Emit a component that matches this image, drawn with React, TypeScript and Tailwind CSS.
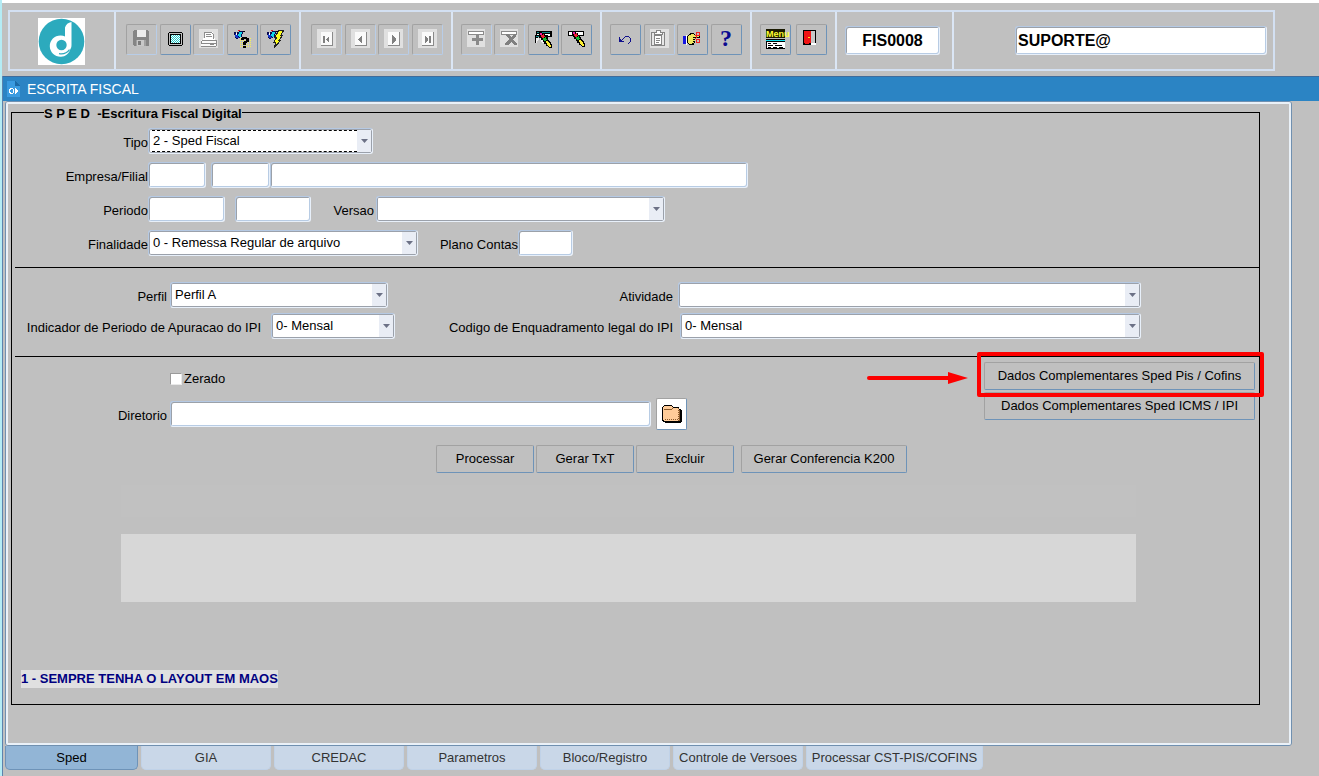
import React, { useState } from 'react';
import clsx from 'clsx';

const TABS = ['Sped', 'GIA', 'CREDAC', 'Parametros', 'Bloco/Registro', 'Controle de Versoes', 'Processar CST-PIS/COFINS'];

const FRAME =
  'rounded-[3px] border border-t-[#b5c9e3] border-l-[#b5c9e3] border-r-[#e8f0fa] border-b-[#e8f0fa] bg-white outline-none';
const SUNKEN = `${FRAME} shadow-[inset_1px_1px_0_#9ba1a9,inset_-1px_-1px_0_#b8cce4]`;
const INPUT = `${SUNKEN} h-[26px] px-1`;
const BUTTON = 'rounded-[2px] border border-t-[#a2a2a2] border-l-[#a2a2a2]';

/* ---------- icons ---------- */

const Icon = ({ children }: { children: React.ReactNode }) => (
  <svg width="29" height="29" viewBox="0 0 29 29" shapeRendering="crispEdges" aria-hidden="true">
    {children}
  </svg>
);

const Plate = () => <rect x="5" y="4" width="19" height="19" fill="#e0e0e0" />;

const Logo = () => (
  <svg width="47" height="47" viewBox="0 0 47 47" role="img" aria-label="Logo">
    <rect width="47" height="47" fill="#fff" />
    <circle cx="23.5" cy="23.5" r="22.8" fill="#2caabd" />
    <path
      d="M27 9.500C28 6.500 30 4.500 33.500 4V27c0 2-.6 3.500-1.500 5-1.500 4-4.500 6.500-9 6.700-6 .2-11.200-4.500-11.200-10.500S16.500 17.500 22.500 17.500c1.800 0 3.300.4 4.500 1.100z"
      fill="#fff"
    />
    <circle cx="23.500" cy="27" r="5.200" fill="#2caabd" />
    <path d="M21 35.600c4.500.8 8.200-.8 10.500-4" stroke="#2caabd" strokeWidth="1.200" fill="none" />
  </svg>
);

const SaveIcon = () => (
  <Icon>
    <path d="M6 6h1V5h14v1h1v15H7v-1H6z" fill="#858585" />
    <rect x="10" y="5" width="9" height="7" fill="#ececec" />
    <rect x="9" y="15" width="10" height="6" fill="#a0a0a0" />
    <rect x="10" y="15" width="7" height="6" fill="#c8c8c8" />
    <rect x="11" y="16" width="3" height="4" fill="#7b7b7b" />
  </Icon>
);

const ScreenIcon = () => (
  <Icon>
    <path d="M8 7h13v1h1v12h-1v1H8v-1H7V8h1z" fill="#000" />
    <rect x="8" y="8" width="13" height="12" fill="#c0c0c0" />
    <rect x="9" y="9" width="11" height="10" fill="#000" />
    <rect x="10" y="10" width="9" height="8" fill="#fff" />
    {[10, 12, 14, 16].map((y) => (
      <React.Fragment key={y}>
        {[10, 12, 14, 16, 18].map((x) => (
          <rect key={x} x={x} y={y} width="1" height="1" fill="#20c8c8" />
        ))}
        {[11, 13, 15, 17].map((x) => (
          <rect key={x} x={x} y={y + 1} width="1" height="1" fill="#20c8c8" />
        ))}
      </React.Fragment>
    ))}
  </Icon>
);

const PrinterIcon = () => (
  <Icon>
    <Plate />
    <path d="M10 7h9v2h1v4h1v2H9v-2h1z" fill="#fff" />
    <path d="M10 7h8v1h-8zM10 8h1v5h-1zM18 8h1v1h-1zM19 9h1v5h-1zM12 9h5v1h-5zM12 11h6v1h-6z" fill="#8e8e8e" />
    <path d="M7 15h16v6H7z" fill="#fafafa" />
    <path d="M8 15h14v1H8zM7 16h1v2H7zM7 18h15v1H7zM7 21h15v1H7zM22 15h1v6h-1zM16 19h4v1h-4z" fill="#8a8a8a" />
  </Icon>
);

const Torch = () => (
  <>
    <path d="M6 7h2v1h1V7h2V6h4v3h-1v3h-2v1h-2v1H8v-1H7v-3H6z" fill="#0a0a50" />
    <path d="M7 9h2v1h1v2h1v1H8v-1H7z" fill="#1536c8" />
    <path d="M11 7h3v2h-1v3h-2v-1h-1V9h1z" fill="#10d4ea" />
    <rect x="8" y="8" width="1" height="2" fill="#fff" />
    <rect x="10" y="5" width="2" height="1" fill="#e02020" />
    <rect x="15" y="6" width="2" height="1" fill="#000" />
  </>
);

const EnterQueryIcon = () => (
  <Icon>
    <Torch />
    {[13, 15, 17, 19, 21].map((y) => (
      <line key={y} x1="12" x2="24" y1={y + 0.5} y2={y + 0.5} stroke="#f5f05a" strokeDasharray="1 1" />
    ))}
    <path d="M14 12h5v1h2v4h-2v1h-1v2h-3v-3h1v-1h2v-2h-2v1h-3v-2h1zM15 21h3v2h-3z" fill="#000" />
  </Icon>
);

const ExecuteQueryIcon = () => (
  <Icon>
    <Torch />
    <path d="M18 5h5l-3 5h2l-4 5h2l-7 8 2-6h-2l3-5h-2z" fill="#ffff20" stroke="#222" strokeWidth="1" />
  </Icon>
);

const NavIcon = ({ d }: { d: string }) => (
  <Icon>
    <Plate />
    <rect x="9" y="7" width="12" height="14" fill="#8a8a8a" />
    <rect x="9" y="7" width="11" height="13" fill="#fafafa" />
    <path d={d} fill="#808080" />
  </Icon>
);

const InsertIcon = () => (
  <Icon>
    <rect x="5" y="4" width="18" height="18" fill="#e0e0e0" />
    <rect x="6.500" y="6.500" width="15" height="3" fill="#fff" stroke="#8a8a8a" />
    <path d="M14 9h3v4h4v3h-4v4h-3v-4h-4v-3h4z" fill="#8a8a8a" />
  </Icon>
);

const RemoveIcon = () => (
  <Icon>
    <rect x="5" y="4" width="18" height="18" fill="#e0e0e0" />
    <rect x="6.500" y="6.500" width="15" height="3" fill="#fff" stroke="#8a8a8a" />
    <path d="M11 9h2l3 3 3-3h2v2l-3 3 4 5v1h-3l-3-3-3 3h-3v-1l4-5-3-3z" fill="#808080" />
  </Icon>
);

const Pencil = () => (
  <>
    <path d="M10 6h3v1h1v1h2v2h2v2h1v2h1v1h1v1h1v2h1v4h-3v-1h-1v-1h-2v-2h-2v-2h-1v-2h-2v-2h-1v-1h-1z" fill="#000" />
    <path d="M11 7h2v2h-2z" fill="#f01ca8" />
    <path d="M12 9h2V8h1v2h1v1h-1v1h-2v-1h-1z" fill="#f02030" />
    <path d="M14 12h2v-1h1v2h1v1h-1v1h-2v-1h-1z" fill="#10c030" />
    <path d="M17 15h2v1h1v1h1v2h1v2h-2v-1h-1v-1h-1v-2h-1z" fill="#fff030" />
  </>
);

const ClearRecordIcon = () => (
  <Icon>
    <path d="M7 6h16v6H7z" fill="#000" />
    <path d="M8 7h13v1H8z" fill="#118888" />
    <path d="M8 9h13v2H8z" fill="#fff" />
    <path d="M6 10h13v8H6z" fill="#000" />
    <path d="M7 11h11v1H7z" fill="#118888" />
    <path d="M7 13h11v5H7z" fill="#eee" />
    <path d="M9 12v1h1v2H9v1H8v2H6v1h7v-2h-1v-2h-1v-2h-1z" fill="#c0c0c0" />
    <g transform="translate(0 1)">
      <Pencil />
    </g>
  </Icon>
);

const ClearFieldIcon = () => (
  <Icon>
    <rect x="6.500" y="6.500" width="15" height="4" fill="#fff" stroke="#000" />
    <Pencil />
  </Icon>
);

const UndoIcon = () => (
  <Icon>
    <path
      d="M8 12h1v2h1v1h1v-1h1v-1h1v-1h1v-1h4v1h1v1h1v4h-1v1h-1v1h-1v-1h1v-1h1v-4h-1v-1h-4v1h-1v1h-1v1h-1v1h2v1H8z"
      fill="#10108c"
    />
  </Icon>
);

const ClipboardIcon = () => (
  <Icon>
    <Plate />
    <rect x="6.500" y="7.500" width="13" height="13" fill="#e8e8e8" stroke="#858585" />
    <rect x="9.500" y="10.500" width="7" height="9" fill="#fff" stroke="#858585" />
    <path d="M9.500 9.500V7.500h2V5.500h4v2h2v2z" fill="#fff" stroke="#858585" />
    <path d="M11 13h4v1h-4zM11 15h4v1h-4zM11 17h3v1h-3z" fill="#858585" />
  </Icon>
);

const HandIcon = () => (
  <Icon>
    <path d="M5 11h3v8H5z" fill="#1414e0" />
    <path d="M8 10h1v10H8z" fill="#fff" />
    <path d="M9 11h1v-1h1V9h1V8h4v1h1v1h5v3h-5v5h-1v2h-5v-1h-1v-1H9z" fill="#000" />
    <path d="M10 11h1v-1h2V9h3v1h1v1h4v1h-6v6h-1v1h-3v-1h-1z" fill="#f0e860" />
    <path d="M15 13h2v1h-2zM15 15h2v1h-2zM15 17h1v1h-1z" fill="#f0e860" />
    <path d="M18.500 7.500h3v3h-3zM18.500 14.500h3v3h-3zM17 10l2 2-2 2" fill="none" stroke="#f02020" />
  </Icon>
);

const HelpIcon = () => (
  <Icon>
    <text x="8" y="21" fontFamily="Liberation Serif, serif" fontSize="24" fontWeight="700" fill="#0a0a90">
      ?
    </text>
  </Icon>
);

const MenuIcon = () => (
  <Icon>
    <rect x="5" y="4" width="19" height="9" fill="#1a1a00" />
    <text
      x="5"
      y="12"
      fontFamily="Liberation Sans Narrow, Liberation Sans, sans-serif"
      fontSize="9"
      fontWeight="700"
      fill="#ffff30"
    >
      Menu
    </text>
    <rect x="5" y="14" width="19" height="1" fill="#000" />
    <rect x="5" y="15" width="19" height="1" fill="#10e0f0" />
    <rect x="5" y="16" width="19" height="8" fill="#000" />
    <rect x="6" y="17" width="18" height="6" fill="#fff" />
    <path d="M7 18h3v1H7zM12 18h4v1h-4zM7 20h5v1H7zM14 20h7v1h-7zM7 22h3v1H7zM12 22h4v1h-4zM18 22h4v1h-4z" fill="#000" />
  </Icon>
);

const ExitIcon = () => (
  <Icon>
    <rect x="6" y="5" width="13" height="15" fill="#000" />
    <rect x="14" y="6" width="4" height="12" fill="#c8c8c8" />
    <rect x="14" y="18" width="5" height="2" fill="#fff" />
    <path d="M7 6h7v12h-2v1H8v-1H7z" fill="#f01414" />
    <rect x="11" y="12" width="2" height="1" fill="#ffe020" />
  </Icon>
);

const FolderIcon = () => (
  <svg width="20" height="18" viewBox="0 0 20 18" shapeRendering="crispEdges" aria-hidden="true">
    <path d="M2 0h8v1h1v1h6v2h2v1h1v12h-1v1H3v-1H1v-1H0V2h1V1h1z" fill="#000" />
    <path d="M2 1h8v1h1v1h6v13H2v-1H1V2h1z" fill="#ffcc99" />
    <path d="M2 4h8v1H2zM10 3h1v1h-1zM17 5h1v11h-1z" fill="#8a5a2b" />
    {[3, 5, 7, 9, 11, 13, 15].map((n) => (
      <React.Fragment key={n}>
        <rect x={n} y="14" width="1" height="1" fill="#8a5a2b" />
        <rect x="16" y={n} width="1" height="1" fill="#8a5a2b" />
      </React.Fragment>
    ))}
  </svg>
);

/* ---------- controls ---------- */

interface ToolButtonProps {
  label: string;
  disabled?: boolean;
  children: React.ReactNode;
}

const ToolButton = ({ label, disabled, children }: ToolButtonProps) => (
  <button
    type="button"
    aria-label={label}
    disabled={disabled}
    className={clsx(
      BUTTON,
      'h-[31px] w-[31px] shrink-0',
      disabled ? 'border-r-[#b8cde8] border-b-[#b8cde8]' : 'border-r-[#6e93b8] border-b-[#6e93b8]'
    )}
  >
    {children}
  </button>
);

const PushButton = ({ className, children }: { className?: string; children: React.ReactNode }) => (
  <button
    type="button"
    className={clsx(BUTTON, 'h-7 border-r-[#6e93b8] border-b-[#6e93b8] bg-[#c0c0c0] whitespace-nowrap', className)}
  >
    {children}
  </button>
);

interface ComboProps {
  id: string;
  options: string[];
  className?: string;
  focused?: boolean;
}

const Combo = ({ id, options, className, focused }: ComboProps) => (
  <div className={clsx('relative', className)}>
    <select
      id={id}
      className={`${FRAME} block h-[26px] w-full appearance-none px-1 pb-px shadow-[inset_0_0_0_1px_#9ba1ab]`}
    >
      {options.map((option) => (
        <option key={option}>{option}</option>
      ))}
    </select>
    {focused && (
      <span className="pointer-events-none absolute inset-y-[2px] right-4 left-1 border-y border-dashed border-black" />
    )}
    <span className="pointer-events-none absolute inset-y-[2px] right-[2px] flex w-3.5 items-center justify-center bg-[#e9edf5]">
      <svg width="7" height="4" viewBox="0 0 7 4" aria-hidden="true">
        <path d="M0 0h7L3.500 4z" fill="#6c7186" />
      </svg>
    </span>
  </div>
);

const Label = ({ htmlFor, className, children }: { htmlFor: string; className?: string; children: React.ReactNode }) => (
  <label htmlFor={htmlFor} className={clsx('shrink-0 pt-1 text-right whitespace-nowrap', className)}>
    {children}
  </label>
);

const ToolGroup = ({ className, children }: { className?: string; children: React.ReactNode }) => (
  <div className={clsx('flex shrink-0 items-start justify-between border-r-2 border-[#dbe6f5]', className)}>
    {children}
  </div>
);

/* ---------- page sections ---------- */

const Toolbar = () => (
  <div className="mr-11 ml-1.5 flex h-[61px] border-2 border-[#d3e0f2]">
    <div className="flex w-[106px] shrink-0 border-r-2 border-[#dbe6f5] pt-1.5 pl-7">
      <Logo />
    </div>
    <ToolGroup className="w-[185px] pt-3 pr-2 pl-2.5">
      <ToolButton label="Salvar" disabled><SaveIcon /></ToolButton>
      <ToolButton label="Tela"><ScreenIcon /></ToolButton>
      <ToolButton label="Imprimir" disabled><PrinterIcon /></ToolButton>
      <ToolButton label="Entrar consulta"><EnterQueryIcon /></ToolButton>
      <ToolButton label="Executar consulta"><ExecuteQueryIcon /></ToolButton>
    </ToolGroup>
    <ToolGroup className="w-[152px] pt-3 pr-2 pl-2.5">
      <ToolButton label="Primeiro registro" disabled><NavIcon d="M11 11h2v7h-2zM14 14l3-3v7l-3-3z" /></ToolButton>
      <ToolButton label="Registro anterior" disabled><NavIcon d="M12 14l4-4v9l-4-4z" /></ToolButton>
      <ToolButton label="Proximo registro" disabled><NavIcon d="M13 10l4 4v1l-4 4z" /></ToolButton>
      <ToolButton label="Ultimo registro" disabled><NavIcon d="M12 11l3 3v1l-3 3zM16 11h2v7h-2z" /></ToolButton>
    </ToolGroup>
    <ToolGroup className="w-[149px] px-2 pt-3">
      <ToolButton label="Inserir registro" disabled><InsertIcon /></ToolButton>
      <ToolButton label="Remover registro" disabled><RemoveIcon /></ToolButton>
      <ToolButton label="Limpar registro"><ClearRecordIcon /></ToolButton>
      <ToolButton label="Limpar campo"><ClearFieldIcon /></ToolButton>
    </ToolGroup>
    <ToolGroup className="w-[150px] px-2 pt-3">
      <ToolButton label="Desfazer"><UndoIcon /></ToolButton>
      <ToolButton label="Colar" disabled><ClipboardIcon /></ToolButton>
      <ToolButton label="Recortar"><HandIcon /></ToolButton>
      <ToolButton label="Ajuda"><HelpIcon /></ToolButton>
    </ToolGroup>
    <ToolGroup className="w-[85px] px-2 pt-3">
      <ToolButton label="Menu"><MenuIcon /></ToolButton>
      <ToolButton label="Sair"><ExitIcon /></ToolButton>
    </ToolGroup>
    <ToolGroup className="w-[117px] px-2 pt-3.5">
      <input
        aria-label="Programa"
        defaultValue="FIS0008"
        className={`${SUNKEN} h-[29px] w-[95px] text-center text-base font-bold`}
      />
    </ToolGroup>
    <div className="flex-1 pt-3.5 pr-1.5 pl-[61px]">
      <input
        aria-label="Usuario"
        defaultValue="SUPORTE@"
        className={`${SUNKEN} h-[29px] w-full px-0.5 text-base font-bold`}
      />
    </div>
  </div>
);

const TitleBar = () => (
  <header className="flex h-[25px] items-center border-t border-[#3f6c9c] bg-[#2b84c4] pl-1 text-white">
    <svg width="14" height="16" viewBox="0 0 14 16" shapeRendering="crispEdges" aria-hidden="true">
      <path d="M0 0h8l5 5v11H0z" fill="#3a9be0" />
      <path d="M8 0v5h5z" fill="#1c6aa6" />
      <path d="M3 7h3v1H4v1H3v2h1v1h2v1H3v-1H2V8h1zM6 8h1v4H6zM8 7h1v1h1v1h1v2h-1v1H9v1H8z" fill="#fff" />
    </svg>
    <h1 className="ml-1.5 text-sm">ESCRITA FISCAL</h1>
  </header>
);

const Highlight = () => (
  <>
    <span className="pointer-events-none absolute -top-2.5 -right-[9px] -bottom-[7px] -left-[7px] rounded-[2px] border-4 border-[#fd0000]" />
    <svg
      className="pointer-events-none absolute top-2.5 right-full mr-4"
      width="102"
      height="12"
      viewBox="0 0 102 12"
      aria-hidden="true"
    >
      <path d="M3 6h84" stroke="#fd0000" strokeWidth="4" strokeLinecap="round" />
      <path d="M82 0l20 6-20 6z" fill="#fd0000" />
    </svg>
  </>
);

const SpedForm = () => (
  <fieldset className="mr-[29px] ml-[3px] min-w-0 border border-black">
    <legend className="ml-8 pt-1 leading-3 font-bold whitespace-pre">S P E D  -Escritura Fiscal Digital</legend>

    <div className="space-y-2 pt-2 pb-[11px]">
      <div className="flex items-center">
        <Label htmlFor="tipo" className="w-[136px]">Tipo</Label>
        <Combo id="tipo" options={['2 - Sped Fiscal']} className="w-[225px]" focused />
      </div>
      <div className="flex items-center">
        <Label htmlFor="empresa" className="w-[136px]">Empresa/Filial</Label>
        <input id="empresa" className={`${INPUT} w-[58px]`} />
        <input aria-label="Filial" className={`${INPUT} ml-[5px] w-[59px]`} />
        <input aria-label="Nome da empresa" className={`${INPUT} w-[478px]`} />
      </div>
      <div className="flex items-center">
        <Label htmlFor="periodo" className="w-[136px]">Periodo</Label>
        <input id="periodo" className={`${INPUT} w-[77px]`} />
        <input aria-label="Periodo final" className={`${INPUT} ml-2.5 w-[76px]`} />
        <Label htmlFor="versao" className="w-[63px]">Versao</Label>
        <Combo id="versao" options={['']} className="ml-0.5 w-[289px]" />
      </div>
      <div className="flex items-center">
        <Label htmlFor="finalidade" className="w-[136px]">Finalidade</Label>
        <Combo id="finalidade" options={['0 - Remessa Regular de arquivo']} className="w-[270px]" />
        <Label htmlFor="plano" className="w-[100px]">Plano Contas</Label>
        <input id="plano" className={`${INPUT} w-[55px]`} />
      </div>
    </div>

    <div className="ml-[3px] space-y-[5px] border-t border-black pt-3.5 pb-[17px]">
      <div className="flex items-center">
        <div className="flex w-[380px] shrink-0 items-center gap-[3px]">
          <Label htmlFor="perfil" className="w-[152px]">Perfil</Label>
          <Combo id="perfil" options={['Perfil A']} className="w-[218px]" />
        </div>
        <Label htmlFor="atividade" className="w-[278px]">Atividade</Label>
        <Combo id="atividade" options={['']} className="mr-[118px] ml-[5px] flex-1" />
      </div>
      <div className="flex items-center">
        <div className="flex w-[380px] shrink-0 items-center justify-between">
          <Label htmlFor="indicador" className="w-[246px]">Indicador de Periodo de Apuracao do IPI</Label>
          <Combo id="indicador" options={['0- Mensal']} className="w-[124px]" />
        </div>
        <Label htmlFor="codigo" className="w-[278px]">Codigo de Enquadramento legal do IPI</Label>
        <Combo id="codigo" options={['0- Mensal']} className="mr-[118px] ml-[7px] flex-1" />
      </div>
    </div>

    <div className="ml-[3px] flex justify-between border-t border-black">
      <div className="pt-3.5">
        <label className="ml-[155px] flex w-fit items-center gap-0.5 leading-4">
          <input
            type="checkbox"
            className="h-3 w-3 appearance-none border border-t-[#9a9a9a] border-r-[#e8e8e8] border-b-[#e8e8e8] border-l-[#9a9a9a] bg-white checked:bg-[#3f6c9c]"
          />
          Zerado
        </label>
        <div className="mt-[11px] flex items-center gap-[3px]">
          <Label htmlFor="diretorio" className="w-[152px]">Diretorio</Label>
          <input id="diretorio" className={`${INPUT} w-[481px]`} />
          <button
            type="button"
            aria-label="Procurar diretorio"
            className={`${BUTTON} ml-0.5 flex h-8 w-[31px] items-center justify-center border-r-[#6e93b8] border-b-[#6e93b8] bg-white`}
          >
            <FolderIcon />
          </button>
        </div>
      </div>
      <div className="mr-1 flex w-[271px] shrink-0 flex-col gap-0.5 pt-[5px]">
        <div className="relative z-10">
          <PushButton className="w-full">Dados Complementares Sped Pis / Cofins</PushButton>
          <Highlight />
        </div>
        <PushButton className="w-full">Dados Complementares Sped ICMS / IPI</PushButton>
      </div>
    </div>

    <div className="mt-[15px] flex gap-0.5 pl-[424px]">
      <PushButton className="w-[98px]">Processar</PushButton>
      <PushButton className="w-[98px]">Gerar TxT</PushButton>
      <PushButton className="w-[98px]">Excluir</PushButton>
      <PushButton className="ml-[5px] w-[166px]">Gerar Conferencia K200</PushButton>
    </div>

    <div className="mt-3 mr-[123px] ml-[109px] h-8 bg-[#c1c1c1]" />
    <div className="mt-[17px] mr-[123px] ml-[109px] h-[68px] bg-[#d7d7d7]" />

    <p className="mt-[68px] mb-4 ml-[9px] w-fit bg-[#e0e0e0] leading-[18px] font-bold text-[#000080]">
      1 - SEMPRE TENHA O LAYOUT EM MAOS
    </p>
  </fieldset>
);

export default function App() {
  const [tab, setTab] = useState(TABS[0]);

  return (
    <div className="min-h-screen bg-[#b4ecf5] pl-0.5 font-['Liberation_Sans',Arial,sans-serif] text-[13px] text-black">
      <div className="min-h-screen border-t-[3px] border-white bg-[#c0c0c0] pt-[7px]">
        <Toolbar />
        <main className="mt-[5px] border-l border-[#5d83ad]">
          <TitleBar />
          <div className="mr-[27px] ml-0.5 rounded-[3px] border border-[#7090b0]">
            <div className="rounded-[2px] border-2 border-[#eaf1f8] pb-[38px]">
              <SpedForm />
            </div>
          </div>
          <nav role="tablist" className="flex gap-[3px] pb-1.5 pl-0.5">
            {TABS.map((name) => (
              <button
                key={name}
                type="button"
                role="tab"
                aria-selected={tab === name}
                onClick={() => setTab(name)}
                className={clsx(
                  'h-6 rounded-b-[5px] border border-t-0 whitespace-nowrap',
                  name.length > 20 ? 'w-[177px]' : 'w-[130px]',
                  tab === name ? 'w-[133px] border-[#6e93b8] bg-[#92b5d6]' : 'border-[#c0d2e8] bg-[#c9d7e8] text-[#333]'
                )}
              >
                {name}
              </button>
            ))}
          </nav>
        </main>
      </div>
    </div>
  );
}
